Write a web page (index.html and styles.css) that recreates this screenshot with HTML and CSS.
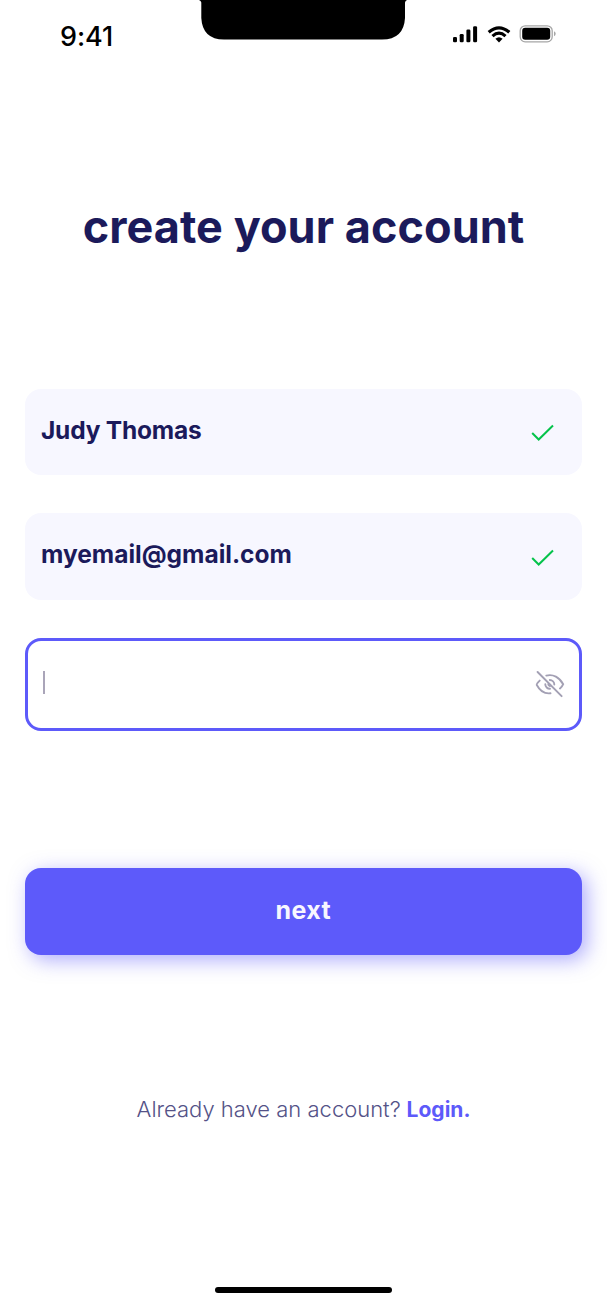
FILE: index.html
```html
<!DOCTYPE html>
<html lang="en">
<head>
<meta charset="utf-8">
<title>Create your account</title>
<link rel="stylesheet" href="styles.css">
</head>
<body>
<div class="screen">
  <header class="status">
    <span class="time">9:41</span>
    <svg class="notch" width="212" height="41" viewBox="0 0 212 41"><path d="M2 0 Q4 0.500 4.300 2.500 V18 Q5.500 39.500 27 39.500 H185 Q206.800 39.500 208 18 V2.500 Q208.300 .5 210 0Z"/></svg>
    <div class="indicators">
      <svg width="25" height="18" viewBox="0 0 25 18"><rect x="0" y="11" width="4" height="5.200" rx="1.300"/><rect x="6.700" y="7.900" width="4" height="8.300" rx="1.300"/><rect x="13.400" y="3.400" width="4" height="12.800" rx="1.300"/><rect x="20.100" y="0.200" width="4" height="16" rx="1.300"/></svg>
      <svg width="24" height="18" viewBox="0 0 24 18"><g fill="none" stroke="#000" stroke-width="3.200"><path d="M1.700 6.300 Q12 -2.700 22.300 6.300"/><path d="M5.500 10.100 Q12 4.300 18.500 10.100"/></g><path d="M12 16.400 L8.400 12.800 Q12 9.700 15.600 12.800Z"/></svg>
      <svg width="37" height="18" viewBox="0 0 37 18"><rect x=".2" y="-.2" width="32" height="16" rx="5" fill="none" stroke="#a6a6a6" stroke-width="1.300"/><rect x="2.200" y="1.800" width="28" height="12" rx="3"/><path d="M34 5.300 Q35.700 6 35.700 7.800 Q35.700 9.600 34 10.300Z" fill="#a6a6a6"/></svg>
    </div>
  </header>
  <h1 class="title">create your account</h1>
  <main class="form">
    <div class="field"><span class="name">Judy Thomas</span><svg class="check" width="24" height="18" viewBox="0 0 24 18"><path d="M1.200 9 L7.700 15.500 L22 1.500"/></svg></div>
    <div class="field"><span class="email">myemail@gmail.com</span><svg class="check" width="24" height="18" viewBox="0 0 24 18"><path d="M1.200 9 L7.700 15.500 L22 1.500"/></svg></div>
    <div class="field active"><span class="caret"></span>
      <svg class="eye" width="30" height="28" viewBox="0 0 30 28"><path d="M2.600 2 L26.600 26.200 M4.700 10.600 Q1.200 14 1.800 15 C5 21 10 24 15.500 23.300 M11.300 5.600 C18 3.700 24.500 7.300 28.200 14.200 Q27 17 25 18.500 M10.300 14.300 A4.500 4.500 0 0 0 15 18.800 M14.800 10 A4.500 4.500 0 0 1 19.300 14.500 M13.600 13.400 A1.700 1.700 0 0 0 15.900 15.700"/></svg>
    </div>
  </main>
  <button class="next"><span>next</span></button>
  <p class="prompt"><span class="question">Already have an account?</span> <a class="login">Login.</a></p>
  <div class="home"></div>
</div>
</body>
</html>
```
FILE: styles.css
```css
* { box-sizing: border-box; }
body { margin: 0; background: #fff; font-family: Inter, "Liberation Sans", sans-serif; }
.screen { width: 607px; height: 1313px; display: flex; flex-direction: column; padding: 0 25px; overflow: hidden; }
.status { height: 80px; display: grid; grid-template-columns: 172px 212px 1fr; flex: none; }
.time { padding: 20px 0 0 35px; font-size: 27px; line-height: 33px; font-weight: 500; letter-spacing: -.1px; }
.indicators { display: flex; gap: 9px; padding: 26px 0 0 44px; }
.indicators svg { flex: none; overflow: visible; }
.title { margin: 117px 0 0; height: 60px; line-height: 60px; text-align: center; white-space: nowrap; color: #1b1a5b; font-size: 45px; font-weight: 700; letter-spacing: .05px; }
.form { margin-top: 131.700px; display: flex; flex-direction: column; gap: 38px; }
.field { width: 556.500px; height: 86.500px; border-radius: 16px; background: #f7f7ff; display: flex; align-items: center; justify-content: space-between; padding: 0 27px 0 16px; color: #1b1a5b; font-size: 24.500px; font-weight: 700; letter-spacing: -.2px; }
.field span { white-space: nowrap; padding-bottom: 3px; }
.field .email { letter-spacing: 0; padding-bottom: 4px; }
.check { margin-top: 3px; }
.check path { fill: none; stroke: #05c34b; stroke-width: 2; }
.active { height: 93px; background: #fff; border: 3px solid #5d5afa; padding: 0 14px 0 15px; }
.field .caret { width: 2px; height: 23px; padding: 0; background: #aaa5b9; margin-bottom: 3px; }
.eye { margin-bottom: 1px; }
.eye path { fill: none; stroke: #a3a0b4; stroke-width: 1.900; stroke-linecap: round; }
.next { margin-top: 137.300px; width: 556.500px; height: 87px; flex: none; border: 0; border-radius: 16px; background: #5d5afa; color: #f7f7ff; font: 700 25px Inter, sans-serif; letter-spacing: .4px; padding: 0 0 3px; box-shadow: 5px 5px 20px rgba(93, 90, 250, .5); }
.prompt { margin: 139px 0 0; height: 30px; line-height: 30px; text-align: center; white-space: nowrap; font-size: 21px; color: #545287; }
.question { font-size: 22px; font-weight: 300; letter-spacing: 0; }
.login { font-weight: 700; color: #5d5afa; }
.home { width: 177px; height: 6px; border-radius: 3px; background: #000; margin: 163px auto 0; flex: none; }
```
